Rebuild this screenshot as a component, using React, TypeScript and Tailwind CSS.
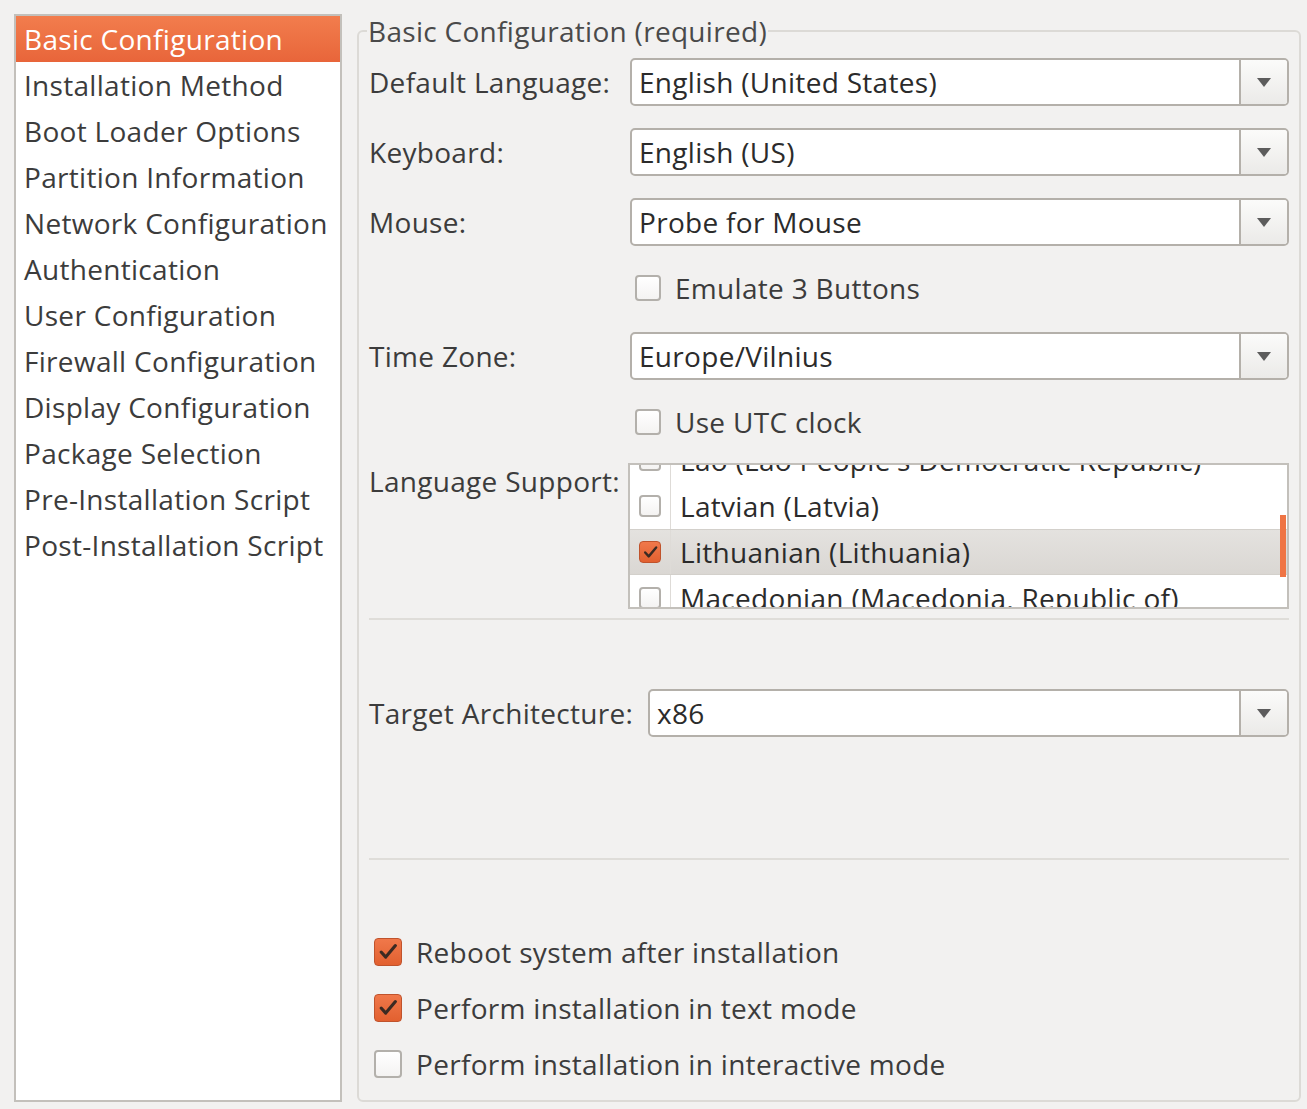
const navItems = [
  "Basic Configuration",
  "Installation Method",
  "Boot Loader Options",
  "Partition Information",
  "Network Configuration",
  "Authentication",
  "User Configuration",
  "Firewall Configuration",
  "Display Configuration",
  "Package Selection",
  "Pre-Installation Script",
  "Post-Installation Script",
];

const languages = [
  { name: "Lao (Lao People's Democratic Republic)", checked: false },
  { name: "Latvian (Latvia)", checked: false },
  { name: "Lithuanian (Lithuania)", checked: true, selected: true },
  { name: "Macedonian (Macedonia, Republic of)", checked: false },
];

function Check({ checked, size = "lg" }: { checked: boolean; size?: "lg" | "md" | "sm" }) {
  const dims =
    size === "lg" ? "h-[28px] w-[28px]" : size === "md" ? "h-[26px] w-[26px]" : "h-[22px] w-[22px]";
  if (checked) {
    return (
      <span
        className={`${dims} flex shrink-0 items-center justify-center rounded-[4px] border border-[#c0532c] bg-gradient-to-b from-[#f0784a] to-[#e2602f]`}
      >
        <svg viewBox="0 0 24 24" className="h-[85%] w-[85%]">
          <path d="M4.5 12 L9.5 17.5 L20 5" fill="none" stroke="#3b2a22" strokeWidth="3.4" strokeLinecap="round" strokeLinejoin="round" />
        </svg>
      </span>
    );
  }
  return (
    <span
      className={`${dims} block shrink-0 rounded-[4px] border-2 border-[#b3b0ab] bg-gradient-to-b from-white to-[#f4f3f2]`}
    />
  );
}

function Combo({ value }: { value: string }) {
  return (
    <div className="flex h-[48px] flex-1 items-stretch overflow-hidden rounded-[5px] border-2 border-[#b4b0aa] bg-white">
      <div className="flex flex-1 items-center pl-[7px] text-[#2b2b2b]">{value}</div>
      <div className="flex w-[48px] items-center justify-center border-l-2 border-[#b4b0aa] bg-gradient-to-b from-[#fbfbfa] to-[#ebeae8]">
        <svg width="14" height="9" viewBox="0 0 14 9">
          <path d="M0 0 H14 L7 9 Z" fill="#5c5c5c" />
        </svg>
      </div>
    </div>
  );
}

function CheckRow({ label, checked, size }: { label: string; checked: boolean; size: "lg" | "md" }) {
  return (
    <div className="flex h-[40px] items-center gap-[14px]">
      <Check checked={checked} size={size} />
      <span>{label}</span>
    </div>
  );
}

export default function App() {
  return (
    <div
      className="flex h-[1109px] w-[1307px] items-start bg-[#f2f1f0] text-[28px] leading-none tracking-[0.3px] text-[#3c3c3c]"
      style={{ fontFamily: '"Open Sans", "DejaVu Sans", sans-serif' }}
    >
      {/* side navigation */}
      <div className="ml-[14px] mt-[14px] h-[1088px] w-[328px] border-2 border-[#c3c0bb] bg-white">
        {navItems.map((item, i) => (
          <div
            key={item}
            className={
              i === 0
                ? "flex h-[46px] items-center bg-gradient-to-b from-[#f27d4d] to-[#e8653a] pl-[8px] text-white"
                : "flex h-[46px] items-center pl-[8px] text-[#3c3c3c]"
            }
          >
            {item}
          </div>
        ))}
      </div>

      {/* settings frame */}
      <fieldset className="ml-[15px] mt-[16px] h-[1086px] w-[944px] rounded-[6px] border-2 border-[#dcdad6] px-[10px]">
        <legend className="ml-[-2px] px-[1px] leading-[30px] text-[#4a4a4a]">Basic Configuration (required)</legend>

        <div className="mt-[12px] flex flex-col">
          <div className="flex items-center">
            <span className="w-[261px]">Default Language:</span>
            <Combo value="English (United States)" />
          </div>
          <div className="mt-[22px] flex items-center">
            <span className="w-[261px]">Keyboard:</span>
            <Combo value="English (US)" />
          </div>
          <div className="mt-[22px] flex items-center">
            <span className="w-[261px]">Mouse:</span>
            <Combo value="Probe for Mouse" />
          </div>
          <div className="mt-[22px] flex items-center pl-[266px]">
            <CheckRow label="Emulate 3 Buttons" checked={false} size="md" />
          </div>
          <div className="mt-[24px] flex items-center">
            <span className="w-[261px]">Time Zone:</span>
            <Combo value="Europe/Vilnius" />
          </div>
          <div className="mt-[22px] flex items-center pl-[266px]">
            <CheckRow label="Use UTC clock" checked={false} size="md" />
          </div>

          <div className="mt-[21px] flex items-start">
            <span className="w-[259px] pt-[4px]">Language Support:</span>
            <div className="relative h-[146px] flex-1 overflow-hidden border-2 border-[#c3c0bb] bg-white">
              <div className="mt-[-28px]">
                {languages.map((lang) => (
                  <div
                    key={lang.name}
                    className={
                      lang.selected
                        ? "flex h-[46px] items-center border-y border-[#d3d0cb] bg-gradient-to-b from-[#e4e2df] to-[#dad7d3] text-[#2b2b2b]"
                        : "flex h-[46px] items-center text-[#2b2b2b]"
                    }
                  >
                    <div className="flex h-full w-[41px] items-center justify-center border-r border-[#dedbd7]">
                      <Check checked={lang.checked} size="sm" />
                    </div>
                    <span className="whitespace-nowrap pl-[9px]">{lang.name}</span>
                  </div>
                ))}
              </div>
              <div className="absolute right-[1px] top-[50px] h-[62px] w-[6px] bg-[#ef7444]" />
            </div>
          </div>

          <div className="mt-[9px] h-[2px] bg-[#dfddd9]" />

          <div className="mt-[69px] flex items-center">
            <span className="w-[279px]">Target Architecture:</span>
            <Combo value="x86" />
          </div>

          <div className="mt-[121px] h-[2px] bg-[#dfddd9]" />

          <div className="mt-[72px] flex flex-col gap-[16px] pl-[5px]">
            <CheckRow label="Reboot system after installation" checked size="lg" />
            <CheckRow label="Perform installation in text mode" checked size="lg" />
            <CheckRow label="Perform installation in interactive mode" checked={false} size="lg" />
          </div>
        </div>
      </fieldset>
    </div>
  );
}
